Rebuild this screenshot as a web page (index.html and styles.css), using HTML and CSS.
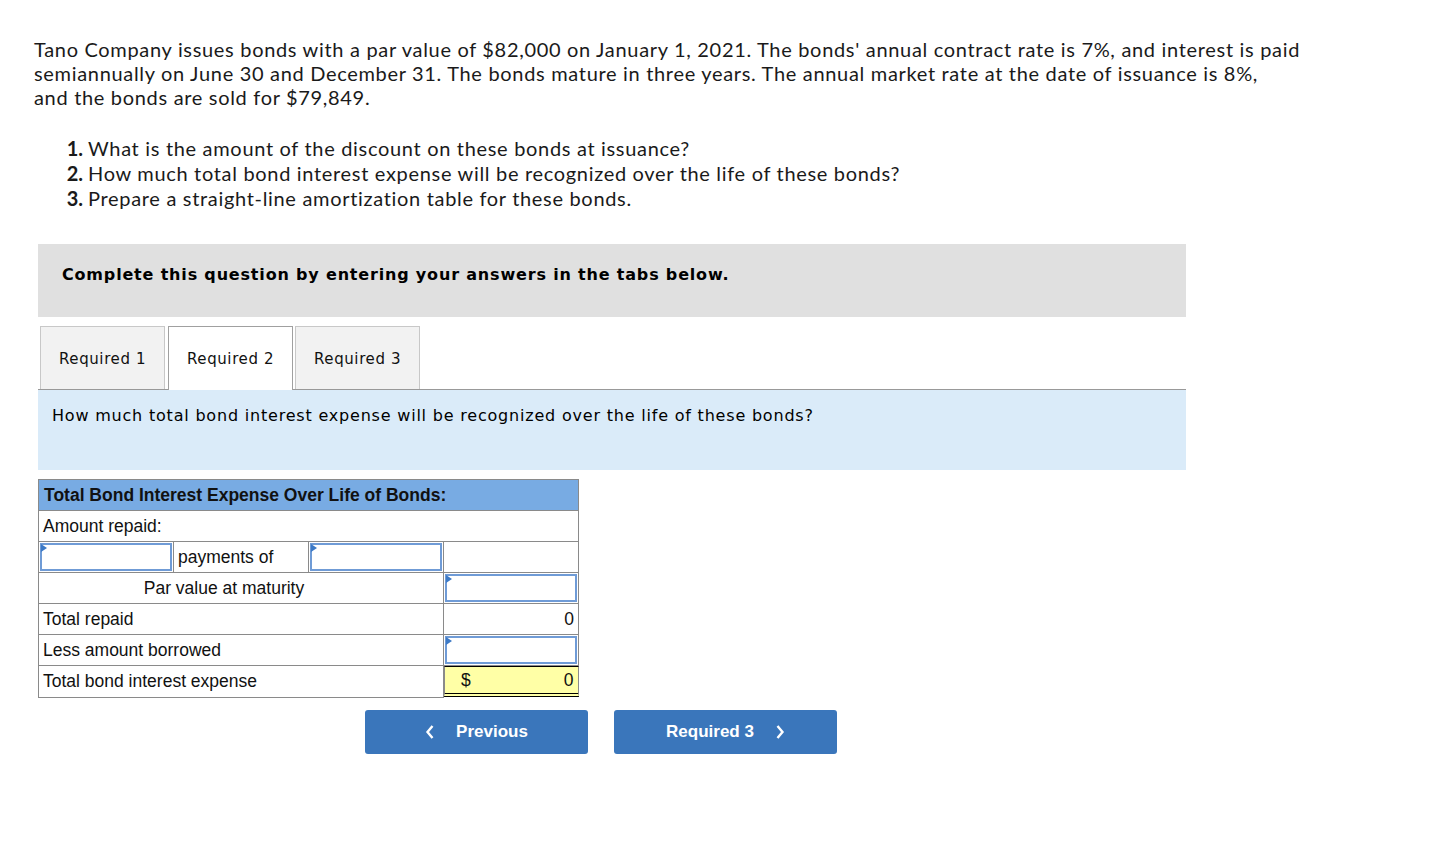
FILE: index.html
```html
<!DOCTYPE html>
<html>
<head>
<meta charset="utf-8">
<link rel="stylesheet" href="styles.css">
</head>
<body>
<div class="page">
  <p class="intro">Tano Company issues bonds with a par value of $82,000 on January 1, 2021. The bonds' annual contract rate is 7%, and interest is paid semiannually on June 30 and December 31. The bonds mature in three years. The annual market rate at the date of issuance is 8%,<br>and the bonds are sold for $79,849.</p>
  <ol class="questions">
    <li><span class="num">1.</span><span>What is the amount of the discount on these bonds at issuance?</span></li>
    <li><span class="num">2.</span><span>How much total bond interest expense will be recognized over the life of these bonds?</span></li>
    <li><span class="num">3.</span><span>Prepare a straight-line amortization table for these bonds.</span></li>
  </ol>
  <div class="instruct">Complete this question by entering your answers in the tabs below.</div>
  <div class="tabs">
    <div class="tab">Required 1</div>
    <div class="tab active">Required 2</div>
    <div class="tab">Required 3</div>
  </div>
  <div class="prompt">How much total bond interest expense will be recognized over the life of these bonds?</div>
  <table class="grid">
    <tr class="head"><th colspan="4">Total Bond Interest Expense Over Life of Bonds:</th></tr>
    <tr><td colspan="4">Amount repaid:</td></tr>
    <tr>
      <td class="inp"><div class="field"></div></td>
      <td>payments of</td>
      <td class="inp"><div class="field"></div></td>
      <td></td>
    </tr>
    <tr>
      <td colspan="3" class="center">Par value at maturity</td>
      <td class="inp"><div class="field"></div></td>
    </tr>
    <tr>
      <td colspan="3">Total repaid</td>
      <td class="num topline">0</td>
    </tr>
    <tr>
      <td colspan="3">Less amount borrowed</td>
      <td class="inp"><div class="field"></div></td>
    </tr>
    <tr>
      <td colspan="3">Total bond interest expense</td>
      <td class="total topline"><span class="dollar">$</span><span>0</span></td>
    </tr>
  </table>
  <div class="nav">
    <button class="btn"><svg width="10" height="16" viewBox="0 0 10 16"><path d="M7.5 2 L2.5 8 L7.5 14" fill="none" stroke="#fff" stroke-width="2.4"/></svg><span>Previous</span></button>
    <button class="btn"><span>Required 3</span><svg width="10" height="16" viewBox="0 0 10 16"><path d="M2.5 2 L7.5 8 L2.5 14" fill="none" stroke="#fff" stroke-width="2.4"/></svg></button>
  </div>
</div>
</body>
</html>
```
FILE: styles.css
```css
html, body { margin: 0; padding: 0; background: #fff; }
.page { padding: 37px 0 0 34px; font-family: "Lato", "Open Sans", sans-serif; color: #1a1a1a; }
.intro { margin: 0; font-size: 20px; line-height: 24px; letter-spacing: 0.68px; width: 1290px; }
.questions { list-style: none; margin: 27px 0 0 0; padding: 0 0 0 28px; font-size: 20px; line-height: 25px; letter-spacing: 0.68px; }
.questions li { display: flex; }
.questions .num { width: 21px; text-align: right; font-weight: bold; margin-right: 5px; letter-spacing: 0; }
.instruct { margin: 33px 0 0 4px; width: 1148px; height: 73px; box-sizing: border-box; background: #e0e0e0; padding: 21px 0 0 24px; font-family: "DejaVu Sans", Verdana, sans-serif; font-weight: bold; font-size: 16px; letter-spacing: 0.82px; color: #000; }
.tabs { margin: 9px 0 0 4px; width: 1146px; display: flex; border-bottom: 1px solid #999; height: 63px; align-items: flex-end; padding-left: 2px; }
.tab { width: 125px; height: 63px; box-sizing: border-box; margin-right: 3px; border: 1px solid #c8c8c8; border-bottom: none; background: #f2f2f2; font-family: "DejaVu Sans", Verdana, sans-serif; font-size: 15px; letter-spacing: 0.6px; color: #111; display: flex; align-items: center; justify-content: center; padding-top: 2px; }
.tab.active { background: #fff; border-color: #a0a0a0; height: 64px; margin-bottom: -1px; margin-right: 2px; padding-top: 2px; padding-bottom: 1px; }
.prompt { margin-left: 4px; width: 1148px; height: 80px; box-sizing: border-box; background: #daebf9; padding: 16px 0 0 14px; font-family: "DejaVu Sans", Verdana, sans-serif; font-size: 16px; letter-spacing: 0.8px; color: #000; }
.grid { margin: 9px 0 0 4px; border-collapse: collapse; width: 541px; font-family: "Liberation Sans", Arial, sans-serif; font-size: 17.5px; color: #111; table-layout: fixed; }
.grid td, .grid th { border: 1px solid #8a8a8a; height: 31px; padding: 0 4px; box-sizing: border-box; }
.grid th { background: #78abe3; text-align: left; font-weight: bold; padding-left: 5px; height: 31px; }
.grid tr td:nth-child(1) { width: 135px; }
.grid .center { text-align: center; padding-right: 38px; }
.grid .num { text-align: right; padding-right: 4px; }
.grid .topline { border-top: 1px solid #000; }
.grid td.inp { padding: 1px; }
.field { position: relative; height: 28px; border: 2px solid #6f9bd6; box-sizing: border-box; background: #fff; }
.field::before { content: ""; position: absolute; left: -1px; top: -1px; border-left: 6px solid #3d7ac6; border-top: 4px solid transparent; border-bottom: 4px solid transparent; }
.grid .total { background: #ffffa6; display: flex; justify-content: space-between; align-items: center; padding: 0 4px 0 16px; border-bottom: 4px double #000; }
.nav { display: flex; gap: 26px; margin: 12px 0 0 331px; }
.btn { width: 223px; height: 44px; border: none; border-radius: 3px; background: #3a76bb; color: #fff; font-family: "Liberation Sans", Arial, sans-serif; font-weight: bold; font-size: 17px; display: flex; align-items: center; justify-content: center; gap: 21px; }
```
